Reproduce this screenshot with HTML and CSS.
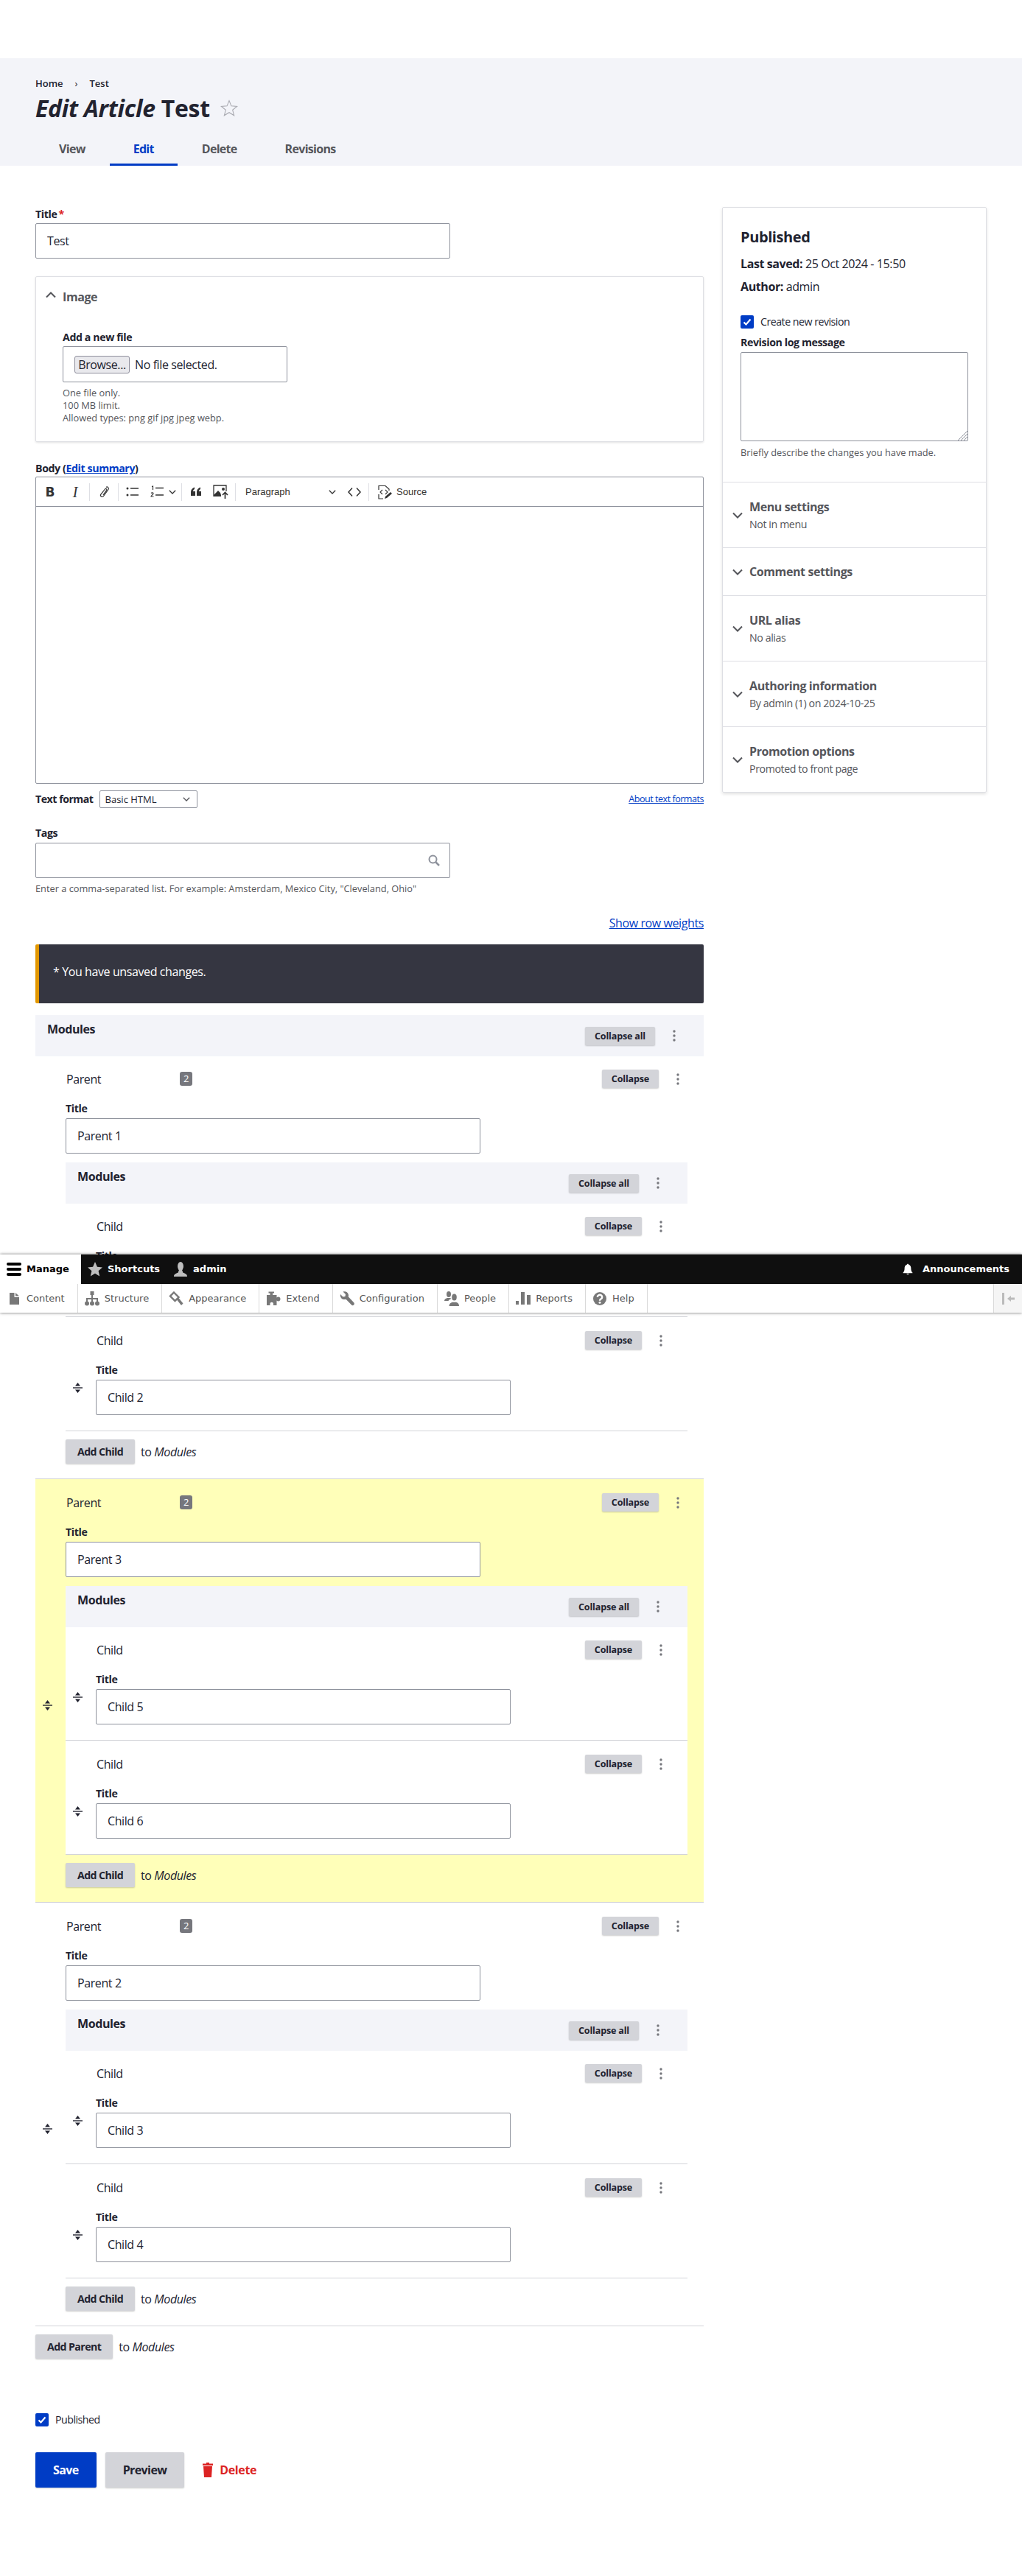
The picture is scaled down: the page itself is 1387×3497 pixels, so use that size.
FILE: index.html
```html
<!DOCTYPE html>
<html lang="en">

<head>
    <meta charset="UTF-8">
    <title>Edit Article Test</title>
    <link rel="stylesheet" href="styles.css">
</head>

<body>
    <svg class="sprite" aria-hidden="true">
        <symbol id="i-dots" viewBox="0 0 4 18"><circle cx="2" cy="3" r="1.7"/><circle cx="2" cy="9" r="1.7"/><circle cx="2" cy="15" r="1.7"/></symbol>
        <symbol id="i-check" viewBox="0 0 18 18"><path d="M4.5 9.5l3 3 6-7" fill="none" stroke="#fff" stroke-width="2.2"/></symbol>
        <symbol id="i-drag" viewBox="0 0 13 14"><path d="M6.5 0L10 4.500H3zM6.500 14L3 9.500h7z"/><rect y="6.300" width="13" height="1.400"/></symbol>
        <symbol id="i-chev" viewBox="0 0 14 9"><path d="M1 1.5l6 6 6-6" fill="none" stroke="currentColor" stroke-width="2"/></symbol>
        <symbol id="i-chev-thin" viewBox="0 0 10 6"><path d="M.8.8L5 5l4.2-4.2" fill="none" stroke="currentColor" stroke-width="1.3"/></symbol>
        <symbol id="i-star" viewBox="0 0 20 20"><path d="M10 0l2.9 6.7 7.1.7-5.4 4.8 1.6 7.3L10 15.7 3.8 19.5l1.6-7.3L0 7.4l7.1-.7z"/></symbol>
        <symbol id="i-user" viewBox="0 0 20 20"><ellipse cx="10" cy="6" rx="4" ry="6"/><path d="M1 20c0-2.500 1-3.600 5.500-5.200L8 11h4l1.500 3.800C18 16.400 19 17.500 19 20z"/></symbol>
        <symbol id="i-bell" viewBox="0 0 20 20"><path d="M10 1c1 0 1.500.6 1.500 1.300C14.500 3.300 15.500 6 15.500 9c0 3.500 1 5.300 2.500 6.500v1H2v-1C3.500 14.300 4.500 12.500 4.500 9c0-3 1-5.700 4-6.700C8.500 1.600 9 1 10 1z"/><path d="M8 17.500h4a2 1.700 0 0 1-4 0z"/></symbol>
        <symbol id="i-content" viewBox="0 0 20 20"><path d="M4 2h6.500v6H17v10H4zM12 2l5 4.500h-5z"/></symbol>
        <symbol id="i-structure" viewBox="0 0 20 20"><rect x="7.500" y="0" width="5" height="5"/><path d="M9 4h2v5h7v5h-2v-3h-5v3H9v-3H4v3H2V9h7z"/><circle cx="3" cy="16.500" r="3"/><circle cx="10" cy="16.500" r="3"/><circle cx="17" cy="16.500" r="3"/></symbol>
        <symbol id="i-appearance" viewBox="0 0 20 20"><path d="M7 1.500l6.500 6.500-5 5L2 6.500z" fill="none" stroke="currentColor" stroke-width="2.400"/><path d="M11 11.500l2.500-2.500 6 7.500-2.500 2.500z"/></symbol>
        <symbol id="i-extend" viewBox="0 0 20 20"><path d="M1 5h4.500V2.500H3.500V.5h7.500v2H9V5h5.500v3.500c1.500-1.500 5-1.300 5 2s-3.500 3.500-5 2V19H10v-2.500a2.300 2.300 0 0 0-4.500 0V19H1z"/></symbol>
        <symbol id="i-config" viewBox="0 0 20 20"><path d="M1 4l3.500 3.500L7.500 7 8 4 4.500.5C8-.8 12 1.500 12 5.500c0 .8-.1 1.300-.3 1.800l7.500 8c1.100 1.100.7 2.300-.1 3.100s-2 1.100-3 .1L8.500 10.800c-.6.200-1.100.3-1.900.3C2.500 11 .2 7.500 1 4z"/></symbol>
        <symbol id="i-people" viewBox="0 0 20 20"><ellipse cx="6" cy="4" rx="3" ry="4"/><path d="M0 13c0-2 1.500-3.200 4-4h4l1.500 1C7 11 6 12 5.500 13z"/><ellipse cx="13.500" cy="8" rx="3.300" ry="4.500"/><path d="M6.500 20c0-3 2-4.500 4.500-5.300h5c2.500.8 4 2.300 4 5.300z"/></symbol>
        <symbol id="i-reports" viewBox="0 0 20 20"><rect y="13" width="4" height="5"/><rect x="7" y="1" width="5" height="17"/><rect x="15" y="5" width="5" height="13"/></symbol>
        <symbol id="i-help" viewBox="0 0 20 20"><circle cx="10" cy="10" r="9"/><path d="M6.800 7.800a3.200 3 0 1 1 4.900 2.500c-1.100.7-1.700 1.300-1.700 2.500" fill="none" stroke="#fff" stroke-width="2.400"/><circle cx="10" cy="15.300" r="1.500" fill="#fff"/></symbol>
    </svg>

    <div class="page-header">
        <div class="breadcrumb"><span>Home</span><span class="crumb-sep">›</span><span>Test</span></div>
        <h1 class="page-title"><span><em>Edit Article</em> Test</span>
            <svg class="title-star" viewBox="0 0 22 22"><path d="M11 1.500l2.700 6.600 7.100.5-5.500 4.500 1.800 6.900-6.100-3.800-6.100 3.800 1.800-6.900L1.200 8.600l7.100-.5z" fill="none" stroke="#a8a9b0"/></svg>
        </h1>
        <ul class="tabs">
            <li class="tab">View</li>
            <li class="tab tab-active">Edit</li>
            <li class="tab">Delete</li>
            <li class="tab">Revisions</li>
        </ul>
    </div>

    <div class="layout">
        <div class="main">
            <label class="field-label">Title<span class="required">*</span></label>
            <input class="text-input" type="text" value="Test">

            <div class="image-box">
                <div class="image-summary">
                    <svg class="chev chev-up"><use href="#i-chev"/></svg>Image
                </div>
                <div class="image-body">
                    <label class="field-label">Add a new file</label>
                    <div class="file-box"><span class="browse">Browse...</span><span>No file selected.</span></div>
                    <p class="desc file-desc">One file only.<br>100 MB limit.<br>Allowed types: png gif jpg jpeg webp.</p>
                </div>
            </div>

            <label class="field-label body-label">Body (<a href="#">Edit summary</a>)</label>
            <div class="editor">
                <div class="ck-toolbar">
                    <span class="ck-btn ck-b">B</span>
                    <span class="ck-btn ck-i">I</span>
                    <span class="ck-sep"></span>
                    <span class="ck-btn">
                        <svg class="ck-icon" viewBox="0 0 20 20"><path d="M13 3.500c1.500-1.500 4.500.8 3 3l-6.500 9c-1.500 2-5 .6-3.800-2.200L11.500 6c1-1.300 3 0 2.200 1.400L9 14" fill="none" stroke="#333" stroke-width="1.200"/></svg>
                    </span>
                    <span class="ck-sep"></span>
                    <span class="ck-btn">
                        <svg class="ck-icon" viewBox="0 0 20 20"><circle cx="3" cy="5" r="1.500" fill="#333"/><circle cx="3" cy="14" r="1.500" fill="#333"/><path d="M7 5h11M7 14h11" stroke="#333" stroke-width="1.500"/></svg>
                    </span>
                    <span class="ck-btn">
                        <svg class="ck-icon" viewBox="0 0 20 20"><path d="M2 2.500l1.500-.5v5M1 11.500c1-1 3-.8 3 .5s-3 2.500-3 4h3.500" fill="none" stroke="#333" stroke-width="1.200"/><path d="M7 4.500h11M7 14h11" stroke="#333" stroke-width="1.500"/></svg>
                    </span>
                    <svg class="ck-caret"><use href="#i-chev-thin"/></svg>
                    <span class="ck-sep ck-sep-wide"></span>
                    <span class="ck-btn">
                        <svg class="ck-icon" viewBox="0 0 20 20"><path d="M3 15v-4c0-4 1.500-6 5-7.500v2.500C6.500 7 6 8 6 9h3v6zM11 15v-4c0-4 1.500-6 5-7.500v2.500C14.500 7 14 8 14 9h3v6z" fill="#333"/></svg>
                    </span>
                    <span class="ck-btn">
                        <svg class="ck-icon ck-icon-image" viewBox="0 0 22 20"><path d="M1 16V1h17v8" fill="none" stroke="#333" stroke-width="1.300"/><path d="M1 16h10V14l-1-3-3-3-6 6zM14 4a2 2 0 1 1 0 4 2 2 0 0 1 0-4z" fill="#333"/><path d="M16.500 19v-8M13 14l3.500-3.500L20 14" fill="none" stroke="#333" stroke-width="1.700"/></svg>
                    </span>
                    <span class="ck-sep"></span>
                    <span class="ck-dropdown">Paragraph<svg class="ck-caret"><use href="#i-chev-thin"/></svg></span>
                    <span class="ck-btn ck-code">
                        <svg class="ck-icon" viewBox="0 0 20 20"><path d="M7 4.500L2 10l5 5.500M13 4.500l5 5.500-5 5.500" fill="none" stroke="#333" stroke-width="1.500"/></svg>
                    </span>
                    <span class="ck-sep"></span>
                    <span class="ck-source">
                        <svg class="ck-icon" viewBox="0 0 20 20"><path d="M1 7V1.500h9l5 4.500v2M1 13v6h6" fill="none" stroke="#333" stroke-width="1.200"/><path d="M6 7l-3 3 3 3M10 7l3 3-3 3" fill="none" stroke="#333" stroke-width="1.100"/><path d="M9 19l1-3 7-6 2 2-7 6z" fill="#333"/></svg>Source
                    </span>
                </div>
                <div class="editor-area"></div>
            </div>
            <div class="format-row">
                <label class="field-label format-label">Text format</label>
                <div class="format-select">Basic HTML<svg class="format-caret"><use href="#i-chev-thin"/></svg></div>
                <a class="format-link" href="#">About text formats</a>
            </div>

            <label class="field-label tags-label">Tags</label>
            <div class="tags-wrap">
                <input class="text-input" type="text">
                <svg class="tags-icon" viewBox="0 0 16 16"><circle cx="6.500" cy="6.500" r="5" fill="none" stroke="#8e929c" stroke-width="2"/><path d="M10.500 10.500L15 15" stroke="#8e929c" stroke-width="2.500"/></svg>
            </div>
            <p class="desc tags-desc">Enter a comma-separated list. For example: Amsterdam, Mexico City, "Cleveland, Ohio"</p>

            <div class="weights"><a href="#">Show row weights</a></div>
            <div class="notice">* You have unsaved changes.</div>

            <div class="mod-head">
                <span class="mod-title">Modules</span>
                <button class="btn-small">Collapse all</button>
                <svg class="dots"><use href="#i-dots"/></svg>
            </div>

            <!-- parent 1 -->
            <div class="row">
                <div class="handle"><svg class="drag"><use href="#i-drag"/></svg></div>
                <div class="row-body">
                    <div class="row-head">
                        <span class="row-name">Parent</span><span class="badge">2</span>
                        <button class="btn-small">Collapse</button>
                        <svg class="dots"><use href="#i-dots"/></svg>
                    </div>
                    <label class="field-label row-label">Title</label>
                    <input class="text-input" type="text" value="Parent 1">
                    <div class="mod-head mod-nested">
                        <span class="mod-title">Modules</span>
                        <button class="btn-small">Collapse all</button>
                        <svg class="dots"><use href="#i-dots"/></svg>
                    </div>
                    <div class="row row-child">
                        <div class="handle"><svg class="drag"><use href="#i-drag"/></svg></div>
                        <div class="row-body">
                            <div class="row-head">
                                <span class="row-name">Child</span>
                                <button class="btn-small">Collapse</button>
                                <svg class="dots"><use href="#i-dots"/></svg>
                            </div>
                            <label class="field-label row-label">Title</label>
                            <input class="text-input" type="text" value="Child 1">
                        </div>
                    </div>
                    <div class="row row-child">
                        <div class="handle"><svg class="drag"><use href="#i-drag"/></svg></div>
                        <div class="row-body">
                            <div class="row-head">
                                <span class="row-name">Child</span>
                                <button class="btn-small">Collapse</button>
                                <svg class="dots"><use href="#i-dots"/></svg>
                            </div>
                            <label class="field-label row-label">Title</label>
                            <input class="text-input" type="text" value="Child 2">
                        </div>
                    </div>
                    <div class="add-row"><button class="btn-add">Add Child</button><span>to <em>Modules</em></span></div>
                </div>
            </div>

            <!-- parent 3, the row that was just dragged -->
            <div class="row row-moved">
                <div class="handle"><svg class="drag"><use href="#i-drag"/></svg></div>
                <div class="row-body">
                    <div class="row-head">
                        <span class="row-name">Parent</span><span class="badge">2</span>
                        <button class="btn-small">Collapse</button>
                        <svg class="dots"><use href="#i-dots"/></svg>
                    </div>
                    <label class="field-label row-label">Title</label>
                    <input class="text-input" type="text" value="Parent 3">
                    <div class="mod-head mod-nested">
                        <span class="mod-title">Modules</span>
                        <button class="btn-small">Collapse all</button>
                        <svg class="dots"><use href="#i-dots"/></svg>
                    </div>
                    <div class="row row-child">
                        <div class="handle"><svg class="drag"><use href="#i-drag"/></svg></div>
                        <div class="row-body">
                            <div class="row-head">
                                <span class="row-name">Child</span>
                                <button class="btn-small">Collapse</button>
                                <svg class="dots"><use href="#i-dots"/></svg>
                            </div>
                            <label class="field-label row-label">Title</label>
                            <input class="text-input" type="text" value="Child 5">
                        </div>
                    </div>
                    <div class="row row-child">
                        <div class="handle"><svg class="drag"><use href="#i-drag"/></svg></div>
                        <div class="row-body">
                            <div class="row-head">
                                <span class="row-name">Child</span>
                                <button class="btn-small">Collapse</button>
                                <svg class="dots"><use href="#i-dots"/></svg>
                            </div>
                            <label class="field-label row-label">Title</label>
                            <input class="text-input" type="text" value="Child 6">
                        </div>
                    </div>
                    <div class="add-row"><button class="btn-add">Add Child</button><span>to <em>Modules</em></span></div>
                </div>
            </div>

            <!-- parent 2 -->
            <div class="row">
                <div class="handle"><svg class="drag"><use href="#i-drag"/></svg></div>
                <div class="row-body">
                    <div class="row-head">
                        <span class="row-name">Parent</span><span class="badge">2</span>
                        <button class="btn-small">Collapse</button>
                        <svg class="dots"><use href="#i-dots"/></svg>
                    </div>
                    <label class="field-label row-label">Title</label>
                    <input class="text-input" type="text" value="Parent 2">
                    <div class="mod-head mod-nested">
                        <span class="mod-title">Modules</span>
                        <button class="btn-small">Collapse all</button>
                        <svg class="dots"><use href="#i-dots"/></svg>
                    </div>
                    <div class="row row-child">
                        <div class="handle"><svg class="drag"><use href="#i-drag"/></svg></div>
                        <div class="row-body">
                            <div class="row-head">
                                <span class="row-name">Child</span>
                                <button class="btn-small">Collapse</button>
                                <svg class="dots"><use href="#i-dots"/></svg>
                            </div>
                            <label class="field-label row-label">Title</label>
                            <input class="text-input" type="text" value="Child 3">
                        </div>
                    </div>
                    <div class="row row-child">
                        <div class="handle"><svg class="drag"><use href="#i-drag"/></svg></div>
                        <div class="row-body">
                            <div class="row-head">
                                <span class="row-name">Child</span>
                                <button class="btn-small">Collapse</button>
                                <svg class="dots"><use href="#i-dots"/></svg>
                            </div>
                            <label class="field-label row-label">Title</label>
                            <input class="text-input" type="text" value="Child 4">
                        </div>
                    </div>
                    <div class="add-row"><button class="btn-add">Add Child</button><span>to <em>Modules</em></span></div>
                </div>
            </div>

            <div class="add-row add-parent"><button class="btn-add">Add Parent</button><span>to <em>Modules</em></span></div>

            <div class="check-row published"><span class="check"><svg><use href="#i-check"/></svg></span>Published</div>

            <div class="actions">
                <button class="btn-big btn-save">Save</button>
                <button class="btn-big">Preview</button>
                <span class="delete">
                    <svg class="delete-icon" viewBox="0 0 14 20"><path d="M5 0h4v1.500h5V4H0V1.500h5zM1 5h12l-1 15H2z" fill="#dc2323"/></svg>Delete
                </span>
            </div>
        </div>

        <div class="sidebar">
            <div class="side-top">
                <h2 class="side-title">Published</h2>
                <p class="side-meta side-saved"><b>Last saved:</b> 25 Oct 2024 - 15:50</p>
                <p class="side-meta side-author"><b>Author:</b> admin</p>
                <div class="check-row revision"><span class="check"><svg><use href="#i-check"/></svg></span>Create new revision</div>
                <label class="field-label log-label">Revision log message</label>
                <div class="log-box">
                    <svg class="log-grip" viewBox="0 0 14 14"><path d="M14 1L1 14M14 5L5 14M14 9l-5 5" stroke="#8e929c"/></svg>
                </div>
                <p class="desc log-desc">Briefly describe the changes you have made.</p>
            </div>
            <div class="side-item">
                <svg class="chev"><use href="#i-chev"/></svg>
                <div><div class="side-item-title">Menu settings</div><div class="side-item-sub">Not in menu</div></div>
            </div>
            <div class="side-item side-item-short">
                <svg class="chev"><use href="#i-chev"/></svg>
                <div><div class="side-item-title">Comment settings</div></div>
            </div>
            <div class="side-item">
                <svg class="chev"><use href="#i-chev"/></svg>
                <div><div class="side-item-title">URL alias</div><div class="side-item-sub">No alias</div></div>
            </div>
            <div class="side-item">
                <svg class="chev"><use href="#i-chev"/></svg>
                <div><div class="side-item-title">Authoring information</div><div class="side-item-sub">By admin (1) on 2024-10-25</div></div>
            </div>
            <div class="side-item">
                <svg class="chev"><use href="#i-chev"/></svg>
                <div><div class="side-item-title">Promotion options</div><div class="side-item-sub">Promoted to front page</div></div>
            </div>
        </div>
    </div>

    <!-- admin toolbar is fixed in the real page, it lies over the form here -->
    <div class="toolbar">
        <div class="bar">
            <div class="bar-item bar-manage">
                <svg class="bars" viewBox="0 0 20 20"><rect y="1" width="20" height="4" rx="2"/><rect y="8" width="20" height="4" rx="2"/><rect y="15" width="20" height="4" rx="2"/></svg>Manage
            </div>
            <div class="bar-item"><svg class="bar-icon"><use href="#i-star"/></svg>Shortcuts</div>
            <div class="bar-item"><svg class="bar-icon"><use href="#i-user"/></svg>admin</div>
            <div class="bar-item bar-right"><svg class="bar-icon bar-bell"><use href="#i-bell"/></svg>Announcements</div>
        </div>
        <div class="tray">
            <div class="tray-item"><svg class="tray-icon"><use href="#i-content"/></svg>Content</div>
            <div class="tray-item"><svg class="tray-icon"><use href="#i-structure"/></svg>Structure</div>
            <div class="tray-item"><svg class="tray-icon"><use href="#i-appearance"/></svg>Appearance</div>
            <div class="tray-item"><svg class="tray-icon"><use href="#i-extend"/></svg>Extend</div>
            <div class="tray-item"><svg class="tray-icon"><use href="#i-config"/></svg>Configuration</div>
            <div class="tray-item"><svg class="tray-icon"><use href="#i-people"/></svg>People</div>
            <div class="tray-item"><svg class="tray-icon"><use href="#i-reports"/></svg>Reports</div>
            <div class="tray-item"><svg class="tray-icon"><use href="#i-help"/></svg>Help</div>
            <div class="tray-toggle">
                <svg viewBox="0 0 20 16"><rect x="2" width="3" height="16" fill="#bbb"/><path d="M9 8l5-4v2.500h5v3h-5V12z" fill="#bbb"/></svg>
            </div>
        </div>
    </div>
</body>

</html>
```

FILE: styles.css
```css
body {
    margin: 0;
    padding-top: 79px;
    position: relative;
    font-family: "Open Sans", "Noto Sans", sans-serif;
    font-size: 16px;
    line-height: 22px;
    color: #222330;
    background-color: #fff;
    letter-spacing: -0.4px;
}

a {
    color: #003cc5;
}

p {
    margin: 0;
}

button {
    font-family: inherit;
    letter-spacing: inherit;
    cursor: pointer;
}

.sprite {
    display: none;
}

/* page header */
.page-header {
    height: 146px;
    box-sizing: border-box;
    padding: 25px 48px 0;
    background-color: #f3f4f9;
}

.breadcrumb {
    display: flex;
    font-size: 13px;
    line-height: 18px;
    font-weight: 600;
    letter-spacing: 0;
}

.crumb-sep {
    margin: 0 16px;
    font-weight: 400;
}

.page-title {
    display: flex;
    align-items: center;
    gap: 14px;
    height: 40px;
    margin: 5px 0 0;
    font-size: 32px;
    line-height: 40px;
    font-weight: 700;
    letter-spacing: -0.3px;
}

.title-star {
    width: 24px;
    height: 24px;
}

.tabs {
    display: flex;
    gap: 1px;
    margin: 10px 0 0;
    padding: 0;
    list-style: none;
}

.tab {
    height: 48px;
    box-sizing: border-box;
    padding: 0 32px;
    font-weight: 700;
    line-height: 50px;
    letter-spacing: -0.7px;
    color: #55565b;
}

.tab-active {
    color: #003cc5;
    border-bottom: 3px solid #003cc5;
}

/* layout */
.layout {
    display: grid;
    grid-template-columns: 907px 359px;
    column-gap: 25px;
    align-items: start;
    padding: 56px 48px 120px 48px;
}

.field-label {
    display: block;
    margin-bottom: 2px;
    font-size: 14.2px;
    line-height: 20px;
    font-weight: 700;
}

.required {
    margin-left: 2px;
    color: #dc2323;
}

.text-input {
    display: block;
    width: 563px;
    height: 48px;
    box-sizing: border-box;
    padding: 0 15px;
    border: 1px solid #8e929c;
    border-radius: 2px;
    background-color: #fff;
    font-family: inherit;
    font-size: 16px;
    letter-spacing: inherit;
    color: #222330;
}

.desc {
    font-size: 12.8px;
    line-height: 17px;
    letter-spacing: 0;
    color: #55565b;
}

/* image widget */
.image-box {
    height: 225px;
    box-sizing: border-box;
    margin-top: 24px;
    border: 1px solid #dedfe4;
    border-radius: 2px;
    box-shadow: 0 1px 3px rgba(0, 0, 0, 0.12);
}

.image-summary {
    display: flex;
    align-items: center;
    height: 53px;
    padding-left: 13px;
    font-weight: 700;
    color: #55565b;
}

.chev {
    width: 14px;
    height: 9px;
    margin-right: 9px;
    color: #55565b;
    flex: none;
}

.chev-up {
    transform: rotate(180deg);
    margin-bottom: 4px;
}

.image-body {
    padding: 19px 0 0 36px;
}

.file-box {
    display: flex;
    align-items: center;
    gap: 7px;
    width: 305px;
    height: 49px;
    box-sizing: border-box;
    padding-left: 15px;
    border: 1px solid #8e929c;
    border-radius: 2px;
}

.browse {
    width: 75px;
    height: 24px;
    box-sizing: border-box;
    border: 1px solid #8f8f9d;
    border-radius: 3px;
    background-color: #e9e9ed;
    line-height: 22px;
    text-align: center;
}

.file-desc {
    margin-top: 6px;
}

/* body editor */
.body-label {
    margin: 26px 0 1px;
}

.editor {
    border: 1px solid #8e929c;
    border-radius: 2px;
}

.ck-toolbar {
    display: flex;
    align-items: center;
    height: 39px;
    padding-left: 2px;
    border-bottom: 1px solid #8e929c;
    font-family: "Liberation Sans", sans-serif;
    font-size: 13px;
    letter-spacing: 0;
    color: #333;
}

.ck-btn {
    display: flex;
    justify-content: center;
    align-items: center;
    width: 34px;
    height: 24px;
}

.ck-b {
    font-family: "DejaVu Sans", sans-serif;
    font-size: 17px;
    font-weight: 700;
}

.ck-i {
    font-family: "Liberation Serif", serif;
    font-size: 20px;
    font-style: italic;
}

.ck-icon {
    width: 20px;
    height: 20px;
}

.ck-icon-image {
    width: 22px;
}

.ck-sep {
    width: 1px;
    height: 24px;
    margin: 0 2px;
    background-color: #dedfe4;
}

.ck-sep-wide {
    margin-left: 5px;
}

.ck-caret {
    width: 10px;
    height: 6px;
    margin-left: -2px;
    margin-right: 2px;
    flex: none;
}

.ck-dropdown {
    display: flex;
    align-items: center;
    justify-content: space-between;
    width: 125px;
    padding-left: 11px;
    box-sizing: content-box;
}

.ck-code {
    margin-left: 6px;
}

.ck-source {
    display: flex;
    align-items: center;
    gap: 5px;
    padding-left: 10px;
}

.editor-area {
    height: 375px;
}

.format-row {
    display: flex;
    align-items: center;
    margin-top: 9px;
    height: 24px;
}

.format-label {
    margin: 0 8px 0 0;
    letter-spacing: -0.5px;
}

.format-select {
    display: flex;
    align-items: center;
    justify-content: space-between;
    width: 133px;
    height: 24px;
    box-sizing: border-box;
    padding: 0 9px 0 7px;
    border: 1px solid #8e929c;
    border-radius: 2px;
    font-size: 13px;
    letter-spacing: 0;
}

.format-caret {
    width: 10px;
    height: 6px;
    color: #55565b;
}

.format-link {
    margin-left: auto;
    font-size: 12.6px;
    letter-spacing: -0.5px;
}

.tags-label {
    margin: 24px 0 3px;
}

.tags-wrap {
    position: relative;
    width: 563px;
}

.tags-icon {
    position: absolute;
    top: 16px;
    right: 14px;
    width: 16px;
    height: 16px;
}

.tags-desc {
    margin-top: 6px;
}

.weights {
    margin-top: 27px;
    text-align: right;
}

.notice {
    height: 80px;
    box-sizing: border-box;
    margin-top: 18px;
    padding: 26px 0 0 19px;
    border-left: 5px solid #e29700;
    border-radius: 2px;
    background-color: #353641;
    color: #fff;
}

/* paragraph rows */
.mod-head {
    display: flex;
    align-items: center;
    height: 56px;
    box-sizing: border-box;
    margin-top: 16px;
    padding: 0 38px 0 16px;
    background-color: #f3f4f9;
}

.mod-nested {
    margin-top: 12px;
}

.mod-title {
    margin-right: auto;
    margin-bottom: 19px;
    font-weight: 700;
}

.btn-small {
    height: 25px;
    padding: 0 13px;
    border: none;
    border-radius: 2px;
    background-color: #d3d4d9;
    box-shadow: 0 1px 2px rgba(0, 0, 0, 0.2);
    font-size: 12.6px;
    font-weight: 700;
    letter-spacing: -0.2px;
    color: #222330;
}

.dots {
    width: 4px;
    height: 18px;
    margin: 0 0 0 24px;
    fill: #76777d;
    flex: none;
}

.row {
    display: flex;
    padding: 18px 0 20px;
    border-bottom: 1px solid #d3d4d9;
}

.row + .row {
    padding-top: 19px;
}

.row-moved {
    background-color: #ffffb9;
}

.row-child {
    padding-bottom: 21px;
    background-color: #fff;
}

.handle {
    display: flex;
    align-items: center;
    flex: none;
    width: 41px;
    box-sizing: border-box;
    padding: 40px 0 0 10px;
}

.drag {
    width: 13px;
    height: 14px;
    fill: #222330;
}

.row-body {
    flex: 1;
    min-width: 0;
    padding-right: 22px;
}

.row-child > .row-body {
    padding-right: 23px;
}

.row-head {
    display: flex;
    align-items: center;
    height: 25px;
    padding-right: 11px;
}

.row-head .btn-small {
    margin-left: auto;
}

.row-name {
    width: 155px;
    padding-left: 1px;
    box-sizing: border-box;
}

.badge {
    width: 17px;
    height: 19px;
    border-radius: 3px;
    background-color: #76777d;
    color: #fff;
    font-size: 13px;
    line-height: 19px;
    text-align: center;
}

.row-label {
    margin: 18px 0 3px;
}

.add-row {
    display: flex;
    align-items: center;
    gap: 8px;
    margin-top: 11px;
}

.btn-add {
    height: 33px;
    padding: 0 16px;
    border: none;
    border-radius: 2px;
    background-color: #d3d4d9;
    box-shadow: 0 1px 2px rgba(0, 0, 0, 0.2);
    font-size: 14.2px;
    font-weight: 700;
    letter-spacing: -0.6px;
    color: #222330;
}

/* form bottom */
.check-row {
    display: flex;
    align-items: center;
    gap: 9px;
    font-size: 14.2px;
    line-height: 18px;
    letter-spacing: -0.5px;
}

.check {
    width: 18px;
    height: 18px;
    border-radius: 2px;
    background-color: #003cc5;
}

.check svg {
    display: block;
    width: 18px;
    height: 18px;
}

.published {
    margin-top: 74px;
}

.actions {
    display: flex;
    align-items: center;
    gap: 12px;
    margin-top: 35px;
}

.btn-big {
    height: 48px;
    padding: 0 24px;
    border: none;
    border-radius: 2px;
    background-color: #d3d4d9;
    box-shadow: 0 1px 2px rgba(0, 0, 0, 0.2);
    font-size: 16px;
    font-weight: 700;
    letter-spacing: -0.6px;
    color: #222330;
}

.btn-save {
    background-color: #003cc5;
    color: #fff;
}

.delete {
    display: flex;
    align-items: center;
    gap: 9px;
    margin-left: 13px;
    font-weight: 700;
    color: #dc2323;
}

.delete-icon {
    width: 14px;
    height: 20px;
}

/* sidebar */
.sidebar {
    border: 1px solid #dedfe4;
    border-radius: 2px;
    box-shadow: 0 2px 4px rgba(0, 0, 0, 0.12);
}

.side-top {
    padding: 27px 24px 31px;
}

.side-title {
    margin: 0;
    font-size: 20px;
    line-height: 26px;
    font-weight: 700;
}

.side-saved {
    margin-top: 12px;
}

.side-author {
    margin-top: 9px;
}

.revision {
    margin-top: 28px;
}

.log-label {
    margin: 9px 0 3px;
}

.log-box {
    position: relative;
    height: 119px;
    border: 1px solid #8e929c;
    border-radius: 2px;
}

.log-grip {
    position: absolute;
    right: 0;
    bottom: 0;
    width: 14px;
    height: 14px;
}

.log-desc {
    margin-top: 7px;
}

.side-item {
    display: flex;
    align-items: center;
    height: 89px;
    box-sizing: border-box;
    padding-left: 13px;
    border-top: 1px solid #dedfe4;
}

.side-item-short {
    height: 65px;
}

.side-item-title {
    font-weight: 700;
    color: #55565b;
}

.side-item-sub {
    margin-top: 3px;
    font-size: 14.2px;
    line-height: 20px;
    color: #55565b;
}

/* admin toolbar */
.toolbar {
    position: absolute;
    top: 1703px;
    left: 0;
    right: 0;
    font-family: "DejaVu Sans", sans-serif;
    font-size: 13px;
    letter-spacing: 0;
    box-shadow: 0 0 4px rgba(0, 0, 0, 0.6);
}

.bar {
    display: flex;
    height: 40px;
    background-color: #0f0f0f;
    color: #fff;
    font-weight: 700;
}

.bar-item {
    display: flex;
    align-items: center;
    gap: 7px;
    padding: 0 9px;
}

.bar-manage {
    width: 110px;
    box-sizing: border-box;
    background-color: #fff;
    color: #000;
}

.bars {
    width: 20px;
    height: 20px;
}

.bar-icon {
    width: 20px;
    height: 20px;
    fill: #bebebe;
}

.bar-right {
    margin-left: auto;
    padding-right: 17px;
    gap: 12px;
}

.bar-bell {
    width: 16px;
    fill: #fff;
}

.tray {
    display: flex;
    height: 39px;
    background-color: #fff;
    color: #565656;
}

.tray-item {
    display: flex;
    align-items: center;
    gap: 7px;
    padding: 0 17px 0 9px;
    border-right: 1px solid #d9d9d9;
}

.tray-icon {
    width: 20px;
    height: 20px;
    color: #787878;
    fill: #787878;
}

.tray-toggle {
    display: flex;
    align-items: center;
    justify-content: center;
    width: 39px;
    margin-left: auto;
    box-sizing: border-box;
    border-left: 1px solid #d9d9d9;
    background-color: #f5f5f5;
}

.tray-toggle svg {
    width: 20px;
    height: 16px;
}
```
